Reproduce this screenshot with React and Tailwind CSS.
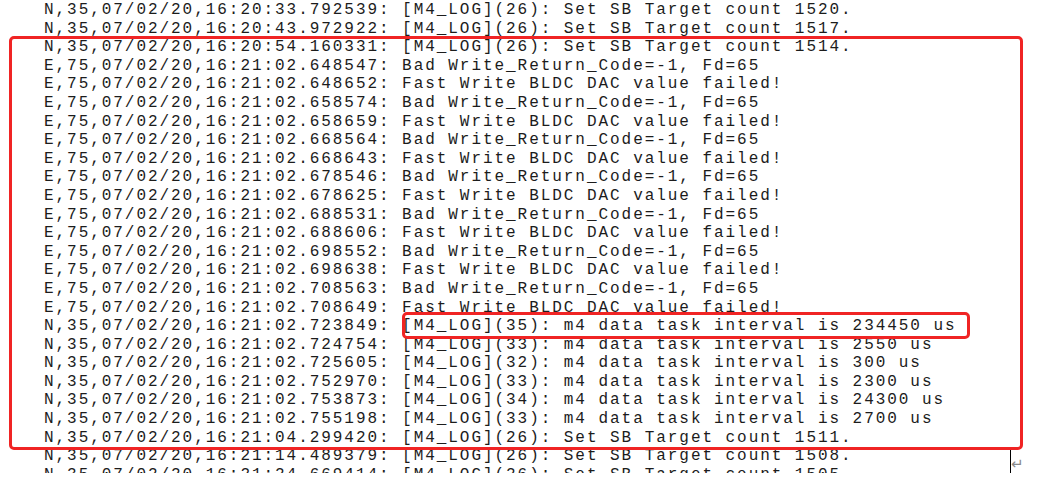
import React from 'react'

const head = 'N,35,07/02/20,16:'
const lines = [
  head + '20:33.792539: [M4_LOG](26): Set SB Target count 1520.',
  head + '20:43.972922: [M4_LOG](26): Set SB Target count 1517.',
  head + '20:54.160331: [M4_LOG](26): Set SB Target count 1514.',
  'E,75,07/02/20,16:21:02.648547: Bad Write_Return_Code=-1, Fd=65',
  'E,75,07/02/20,16:21:02.648652: Fast Write BLDC DAC value failed!',
  'E,75,07/02/20,16:21:02.658574: Bad Write_Return_Code=-1, Fd=65',
  'E,75,07/02/20,16:21:02.658659: Fast Write BLDC DAC value failed!',
  'E,75,07/02/20,16:21:02.668564: Bad Write_Return_Code=-1, Fd=65',
  'E,75,07/02/20,16:21:02.668643: Fast Write BLDC DAC value failed!',
  'E,75,07/02/20,16:21:02.678546: Bad Write_Return_Code=-1, Fd=65',
  'E,75,07/02/20,16:21:02.678625: Fast Write BLDC DAC value failed!',
  'E,75,07/02/20,16:21:02.688531: Bad Write_Return_Code=-1, Fd=65',
  'E,75,07/02/20,16:21:02.688606: Fast Write BLDC DAC value failed!',
  'E,75,07/02/20,16:21:02.698552: Bad Write_Return_Code=-1, Fd=65',
  'E,75,07/02/20,16:21:02.698638: Fast Write BLDC DAC value failed!',
  'E,75,07/02/20,16:21:02.708563: Bad Write_Return_Code=-1, Fd=65',
  'E,75,07/02/20,16:21:02.708649: Fast Write BLDC DAC value failed!',
  head + '21:02.723849: [M4_LOG](35): m4 data task interval is 234450 us',
  head + '21:02.724754: [M4_LOG](33): m4 data task interval is 2550 us',
  head + '21:02.725605: [M4_LOG](32): m4 data task interval is 300 us',
  head + '21:02.752970: [M4_LOG](33): m4 data task interval is 2300 us',
  head + '21:02.753873: [M4_LOG](34): m4 data task interval is 24300 us',
  head + '21:02.755198: [M4_LOG](33): m4 data task interval is 2700 us',
  head + '21:04.299420: [M4_LOG](26): Set SB Target count 1511.',
  head + '21:14.489379: [M4_LOG](26): Set SB Target count 1508.',
  head + '21:24.669414: [M4_LOG](26): Set SB Target count 1505.',
]

export default function App() {
  return (
    <div className="relative h-[480px] w-[1063px] bg-white">
      <div className="h-[473px] overflow-hidden">
        <div className="whitespace-pre pl-[44px] pt-[1px] font-['Liberation_Mono',monospace] text-[16px] leading-[18.6px] tracking-[1.95px] text-[#1c1c1c]">
          {lines.map((l, i) => (
            <div key={i}>{l}</div>
          ))}
        </div>
      </div>

      {/* annotation boxes */}
      <div className="absolute left-[9px] top-[36px] h-[414px] w-[1014px] rounded-[5px] border-[3.5px] border-[#f02424]" />
      <div className="absolute left-[402px] top-[312px] h-[27px] w-[568px] rounded-[5px] border-[3px] border-[#f02424]" />

      {/* cursor + paragraph mark */}
      <div className="absolute left-[1010px] top-[450px] h-[23px] w-px bg-black" />
      <span className="absolute left-[1011px] top-[453px] font-['DejaVu_Sans',sans-serif] text-[15px] text-[#8a8a8a]">↵</span>
    </div>
  )
}
